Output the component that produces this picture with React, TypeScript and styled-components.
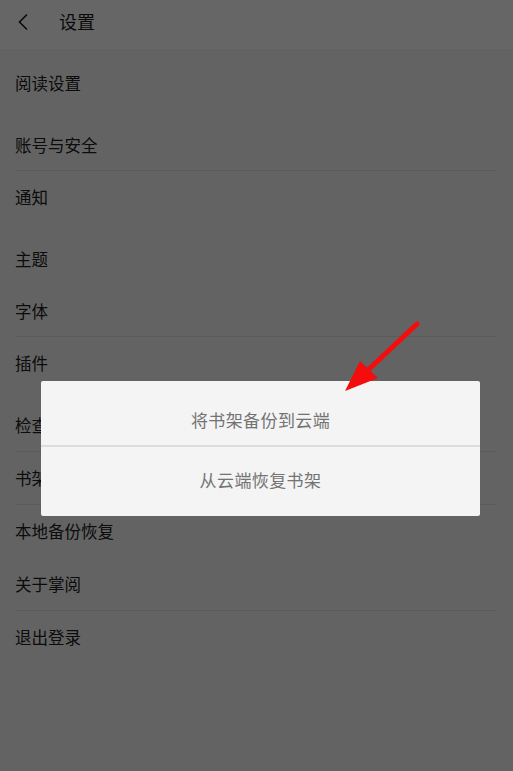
import React from 'react';
import styled, { createGlobalStyle } from 'styled-components';

const GlobalStyle = createGlobalStyle`
  html, body {
    margin: 0;
    padding: 0;
    background: #f8f8f8;
  }
  body {
    font-family: "Noto Sans CJK SC", "Noto Sans", sans-serif;
  }
`;

const Page = styled.div`
  width: 513px;
  height: 771px;
  background: #f8f8f8;
  position: relative;
  overflow: hidden;
`;

const Header = styled.div`
  height: 50px;
  display: flex;
  align-items: center;
  background: #ffffff;
  border-bottom: 1px solid #eeeeee;
  margin-bottom: 6px;
`;

const BackButton = styled.div`
  width: 59px;
  height: 50px;
  display: flex;
  align-items: center;
  padding: 0 0 6px 17px;
  box-sizing: border-box;
`;

const Title = styled.div`
  font-size: 18px;
  color: #1a1a1a;
  line-height: 1;
  margin-top: -9px;
`;

const Group = styled.div`
  margin-bottom: 10px;
`;

const Row = styled.div<{ $divided?: boolean; $tall?: boolean }>`
  height: ${(p) => (p.$tall ? 53 : 52)}px;
  display: flex;
  align-items: center;
  margin: 0 16px 0 15px;
  font-size: 16.5px;
  color: #202020;
  border-bottom: 1px solid ${(p) => (p.$divided ? '#e4e4e4' : 'transparent')};
  box-sizing: border-box;
`;

const Overlay = styled.div`
  position: absolute;
  inset: 0;
  background: rgba(0, 0, 0, 0.6);
  padding: 381px 0 0 41px;
  box-sizing: border-box;
`;

const Dialog = styled.div`
  width: 439px;
  background: #f4f4f4;
  border-radius: 2px;
  display: flex;
  flex-direction: column;
`;

const DialogItem = styled.div<{ $first?: boolean }>`
  height: ${(p) => (p.$first ? 66 : 69)}px;
  display: flex;
  align-items: center;
  justify-content: center;
  padding: ${(p) => (p.$first ? '12px 0 0' : '0 0 4px')};
  font-size: 17px;
  color: #737373;
  letter-spacing: 0.4px;
  border-bottom: ${(p) => (p.$first ? '2px solid #dcdcdc' : 'none')};
  box-sizing: border-box;
`;

const Arrow = styled.svg`
  position: absolute;
  left: 335px;
  top: 315px;
`;

const groups: { label: string; divided?: boolean }[][] = [
  [{ label: '阅读设置' }],
  [{ label: '账号与安全', divided: true }, { label: '通知' }],
  [{ label: '主题' }, { label: '字体', divided: true }, { label: '插件' }],
  [
    { label: '检查更新', divided: true },
    { label: '书架同步', divided: true },
    { label: '本地备份恢复' },
    { label: '关于掌阅', divided: true },
    { label: '退出登录' },
  ],
];

const App: React.FC = () => {
  return (
    <Page>
      <GlobalStyle />
      <Header>
        <BackButton>
          <svg width="12" height="18" viewBox="0 0 12 18">
            <path d="M10 1.5 L2.5 9 L10 16.5" fill="none" stroke="#1a1a1a" strokeWidth="1.6" />
          </svg>
        </BackButton>
        <Title>设置</Title>
      </Header>

      {groups.map((group, gi) => (
        <Group key={gi}>
          {group.map((item) => (
            <Row key={item.label} $divided={item.divided} $tall={gi === 3}>
              {item.label}
            </Row>
          ))}
        </Group>
      ))}

      <Overlay>
        <Dialog>
          <DialogItem $first>将书架备份到云端</DialogItem>
          <DialogItem>从云端恢复书架</DialogItem>
        </Dialog>
      </Overlay>

      <Arrow width="90" height="85" viewBox="0 0 90 85">
        <line x1="82" y1="9" x2="33" y2="55" stroke="#f50c0c" strokeWidth="5" strokeLinecap="round" />
        <polygon points="10,76 25,46 43,63" fill="#f50c0c" />
      </Arrow>
    </Page>
  );
};

export default App;
